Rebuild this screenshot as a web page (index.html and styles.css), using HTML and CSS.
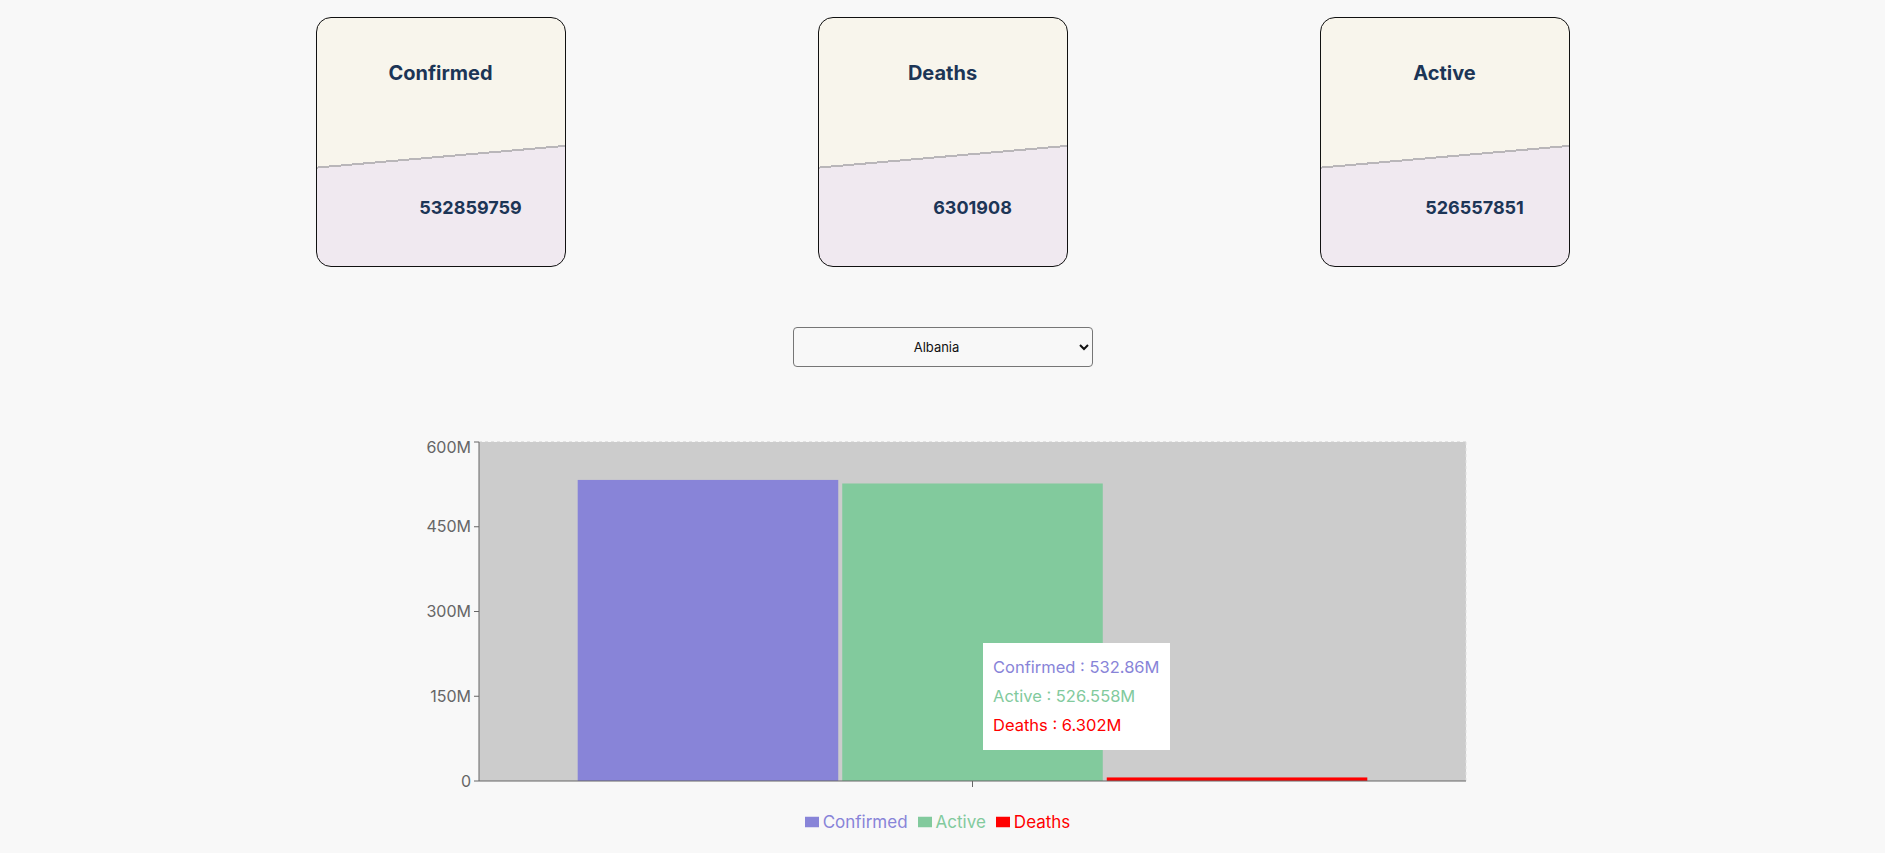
FILE: index.html
```html
<!DOCTYPE html>
<html lang="en">
<head>
<meta charset="utf-8">
<title>Covid stats</title>
<link rel="stylesheet" href="styles.css">
</head>
<body>
<main class="page">
  <section class="cards">
    <div class="card">
      <h2 class="card-title">Confirmed</h2>
      <p class="card-value">532859759</p>
    </div>
    <div class="card">
      <h2 class="card-title">Deaths</h2>
      <p class="card-value">6301908</p>
    </div>
    <div class="card">
      <h2 class="card-title">Active</h2>
      <p class="card-value">526557851</p>
    </div>
  </section>

  <div class="picker">
    <select class="country">
      <option>Albania</option>
    </select>
  </div>

  <section class="chart">
    <div class="chart-box">
      <svg class="chart-svg" width="1101" height="374" viewBox="0 0 1101 374">
        <rect x="87" y="5" width="987" height="339" fill="#cccccc"/>
        <line x1="87" y1="5" x2="1074" y2="5" stroke="#cccccc" stroke-dasharray="3 3"/>
        <line x1="1074" y1="5" x2="1074" y2="344" stroke="#e0e0e0" stroke-dasharray="3 3"/>
        <rect x="185.7" y="42.93" width="260.53" height="301.07" fill="#8884d8"/>
        <rect x="450.23" y="46.49" width="260.53" height="297.51" fill="#82ca9d"/>
        <rect x="714.77" y="340.44" width="260.53" height="3.56" fill="#ff0000"/>
        <g stroke="#666666" fill="none">
          <line x1="87" y1="5" x2="87" y2="344"/>
          <line x1="87" y1="344" x2="1074" y2="344"/>
          <line x1="82" y1="5" x2="87" y2="5"/>
          <line x1="82" y1="89.75" x2="87" y2="89.75"/>
          <line x1="82" y1="174.5" x2="87" y2="174.5"/>
          <line x1="82" y1="259.25" x2="87" y2="259.25"/>
          <line x1="82" y1="344" x2="87" y2="344"/>
          <line x1="580.5" y1="344" x2="580.5" y2="350"/>
        </g>
        <g class="ytick" text-anchor="end">
          <text x="79" y="10.5" dy="0.355em">600M</text>
          <text x="79" y="89.75" dy="0.355em">450M</text>
          <text x="79" y="174.5" dy="0.355em">300M</text>
          <text x="79" y="259.25" dy="0.355em">150M</text>
          <text x="79" y="344" dy="0.355em">0</text>
        </g>
      </svg>
      <div class="tooltip">
        <ul class="tip-list">
          <li class="tip-item tip-confirmed">Confirmed : 532.86M</li>
          <li class="tip-item tip-active">Active : 526.558M</li>
          <li class="tip-item tip-deaths">Deaths : 6.302M</li>
        </ul>
      </div>
    </div>
    <ul class="legend">
      <li class="legend-item legend-confirmed">
        <svg class="legend-icon" width="14" height="14" viewBox="0 0 32 32"><path d="M0,4h32v24h-32z" fill="#8884d8"/></svg>
        <span>Confirmed</span>
      </li>
      <li class="legend-item legend-active">
        <svg class="legend-icon" width="14" height="14" viewBox="0 0 32 32"><path d="M0,4h32v24h-32z" fill="#82ca9d"/></svg>
        <span>Active</span>
      </li>
      <li class="legend-item legend-deaths">
        <svg class="legend-icon" width="14" height="14" viewBox="0 0 32 32"><path d="M0,4h32v24h-32z" fill="#ff0000"/></svg>
        <span>Deaths</span>
      </li>
    </ul>
  </section>
</main>
</body>
</html>
```

FILE: styles.css
```css
html, body {
  margin: 0;
  padding: 0;
  background: #f8f8f8;
}

body {
  font-family: Inter, "Noto Sans", "Liberation Sans", sans-serif;
}

.page {
  padding-top: 17px;
}

.cards {
  display: flex;
  justify-content: center;
  gap: 252px;
}

.card {
  box-sizing: border-box;
  width: 250px;
  height: 250px;
  border: 1px solid #111111;
  border-radius: 15px;
  display: flex;
  flex-direction: column;
  align-items: center;
  padding-top: 43px;
  background: linear-gradient(175deg, #f8f5ec 0, #f8f5ec 148px, #b9b6b9 148px, #b9b6b9 150px, #f0e9f0 150px, #f0e9f0 100%);
}

.card-title {
  margin: 0;
  font-size: 20px;
  line-height: 24px;
  font-weight: 700;
  color: #1c3556;
}

.card-value {
  margin: 112px 0 0 0;
  padding-left: 60px;
  font-size: 18px;
  line-height: 22px;
  font-weight: 700;
  color: #1c3556;
}

.picker {
  display: flex;
  justify-content: center;
  margin-top: 60px;
}

.country {
  width: 300px;
  height: 40px;
  border: 1px solid #767676;
  border-radius: 4px;
  background: #f8f8f8;
  font-family: Inter, "Noto Sans", sans-serif;
  font-size: 13px;
  color: #111;
  text-align: center;
  text-align-last: center;
}

.chart {
  margin-top: 70px;
}

.chart-box {
  position: relative;
  width: 1101px;
  margin: 0 auto;
}

.chart-svg {
  display: block;
}

.ytick text {
  font-family: Inter, "Noto Sans", sans-serif;
  font-size: 16px;
  fill: #666666;
}

.tooltip {
  position: absolute;
  left: 591px;
  top: 206px;
  background: #ffffff;
  padding: 10px;
  white-space: nowrap;
}

.tip-list {
  margin: 0;
  padding: 0;
  list-style: none;
}

.tip-item {
  padding: 4px 0;
  font-size: 16.5px;
  line-height: 21px;
}

.tip-confirmed { color: #8884d8; }
.tip-active { color: #82ca9d; }
.tip-deaths { color: #ff0000; }

.legend {
  display: flex;
  justify-content: center;
  margin: 0;
  padding: 0;
  list-style: none;
}

.legend-item {
  display: flex;
  align-items: center;
  margin-right: 10px;
  font-size: 17px;
  line-height: 22px;
}

.legend-icon {
  display: block;
  margin-right: 4px;
}

.legend-confirmed { color: #8884d8; }
.legend-active { color: #82ca9d; }
.legend-deaths { color: #ff0000; }
```
